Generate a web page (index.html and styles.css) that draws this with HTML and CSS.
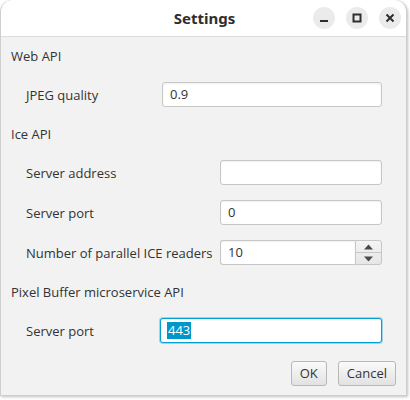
FILE: index.html
```html
<!DOCTYPE html>
<html>
<head>
<meta charset="utf-8">
<link rel="stylesheet" href="styles.css">
</head>
<body>
<div class="window">
  <div class="titlebar">
    <div class="title">Settings</div>
    <div class="controls">
      <div class="ctl"><svg width="22" height="22" viewBox="0 0 22 22"><rect x="7" y="13" width="8" height="2" fill="#2e2e2e"/></svg></div>
      <div class="ctl"><svg width="22" height="22" viewBox="0 0 22 22"><rect x="7.5" y="7.5" width="7" height="7" fill="none" stroke="#2e2e2e" stroke-width="2"/></svg></div>
      <div class="ctl"><svg width="22" height="22" viewBox="0 0 22 22"><path d="M7.5 7.5 L14.5 14.5 M14.5 7.5 L7.5 14.5" stroke="#2e2e2e" stroke-width="2" stroke-linecap="butt"/></svg></div>
    </div>
  </div>
  <div class="content">
    <div class="section-title">Web API</div>
    <div class="form form-web">
      <div class="label">JPEG quality</div>
      <div class="field">0.9</div>
    </div>
    <div class="section-title">Ice API</div>
    <div class="form form-ice">
      <div class="label">Server address</div>
      <div class="field"></div>
      <div class="label">Server port</div>
      <div class="field">0</div>
      <div class="label">Number of parallel ICE readers</div>
      <div class="spinner">
        <div class="field spin-field">10</div>
        <div class="spin-btns">
          <div class="spin-btn"><svg width="9" height="6" viewBox="0 0 9 6"><path d="M0 5.5 L4.5 0.5 L9 5.5 Z" fill="#4a4a4a"/></svg></div>
          <div class="spin-btn"><svg width="9" height="6" viewBox="0 0 9 6"><path d="M0 0.5 L4.5 5.5 L9 0.5 Z" fill="#4a4a4a"/></svg></div>
        </div>
      </div>
    </div>
    <div class="section-title">Pixel Buffer microservice API</div>
    <div class="form form-pixel">
      <div class="label">Server port</div>
      <div class="field focused"><span class="sel">443</span></div>
    </div>
    <div class="buttons">
      <div class="btn">OK</div>
      <div class="btn">Cancel</div>
    </div>
  </div>
</div>
</body>
</html>
```
FILE: styles.css
```css
html, body {
  margin: 0;
  padding: 0;
  background: #ffffff;
}
body {
  width: 410px;
  height: 400px;
  overflow: hidden;
}
.window {
  width: 405px;
  height: 395px;
  background: #f2f2f2;
  border: 1px solid #cfcfcf;
  border-top: none;
  border-radius: 12px 12px 0 0;
  box-shadow: 1px 1px 3px rgba(0,0,0,0.25);
  font-family: "Open Sans", "Noto Sans", sans-serif;
  font-size: 13px;
  color: #333333;
  display: flex;
  flex-direction: column;
  overflow: hidden;
}
.titlebar {
  height: 36px;
  background: #ffffff;
  border-bottom: 1px solid #dcdcdc;
  border-radius: 12px 12px 0 0;
  display: flex;
  align-items: center;
  justify-content: center;
  position: relative;
  flex-shrink: 0;
}
.title {
  font-family: "Noto Sans", "Open Sans", sans-serif;
  font-weight: bold;
  font-size: 15px;
  color: #2e2e2e;
  margin-left: 2px;
}
.controls {
  position: absolute;
  right: 5px;
  top: 7px;
  display: flex;
  gap: 11px;
}
.ctl {
  width: 22px;
  height: 22px;
  border-radius: 50%;
  background: #ebebeb;
}
.ctl svg { display: block; }
.content {
  padding: 10px 10px 0 10px;
  display: flex;
  flex-direction: column;
}
.section-title {
  height: 18px;
  line-height: 18px;
  margin-bottom: 17px;
}
.form {
  display: grid;
  row-gap: 15px;
  padding-left: 15px;
  padding-right: 14px;
  margin-bottom: 18px;
  align-items: center;
}
.form-web { grid-template-columns: 136px 1fr; }
.form-ice { grid-template-columns: 194px 1fr; }
.form-pixel { grid-template-columns: 134px 1fr; }
.label {
  line-height: 18px;
  white-space: nowrap;
}
.field {
  height: 25px;
  box-sizing: border-box;
  background: #ffffff;
  border: 1px solid #c6c6c6;
  border-radius: 3px;
  box-shadow: inset 0 1px 2px rgba(0,0,0,0.06);
  padding: 0 7px;
  line-height: 23px;
  color: #333333;
}
.field.focused {
  border: 1px solid #039ed3;
  box-shadow: 0 0 0 1px rgba(3,158,211,0.35);
  padding-left: 6px;
}
.sel {
  background: #0096c9;
  color: #ffffff;
  display: inline-block;
  line-height: 17px;
  padding: 0 1px;
}
.spinner {
  display: flex;
  height: 25px;
}
.spin-field {
  flex: 1;
  border-radius: 3px 0 0 3px;
  border-right: none;
}
.spin-btns {
  width: 27px;
  box-sizing: border-box;
  border: 1px solid #c6c6c6;
  border-radius: 0 3px 3px 0;
  display: flex;
  flex-direction: column;
  background: linear-gradient(#f4f4f4, #e6e6e6);
}
.spin-btn {
  flex: 1;
  display: flex;
  align-items: center;
  justify-content: center;
}
.spin-btn + .spin-btn {
  border-top: 1px solid #c6c6c6;
}
.spin-btn svg { display: block; }
.buttons {
  display: flex;
  justify-content: flex-end;
  gap: 11px;
  margin-top: 0;
}
.btn {
  height: 25px;
  box-sizing: border-box;
  border: 1px solid #b8b8b8;
  border-radius: 3px;
  background: linear-gradient(#fafafa, #e2e2e2);
  line-height: 23px;
  padding: 0 8px;
  color: #333333;
}
```
